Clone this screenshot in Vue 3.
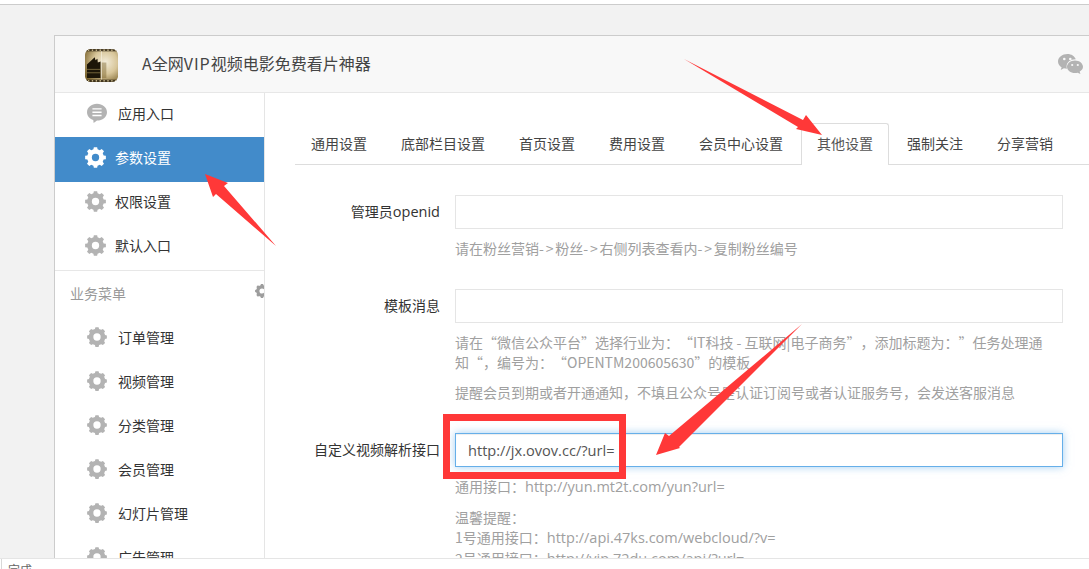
<script setup>
function gear(R, r, hole, n) {
  const pts = []
  const step = (Math.PI * 2) / n
  for (let i = 0; i < n; i++) {
    const a = i * step - Math.PI / 2
    const w = step * 0.2
    const w2 = step * 0.32
    pts.push([a - w2, r], [a - w, R], [a + w, R], [a + w2, r])
  }
  const ring = pts
    .map(([a, d], i) => `${i ? 'L' : 'M'}${(12 + d * Math.cos(a)).toFixed(2)} ${(12 + d * Math.sin(a)).toFixed(2)}`)
    .join('')
  return `${ring}ZM${12 - hole} 12a${hole} ${hole} 0 1 0 ${hole * 2} 0a${hole} ${hole} 0 1 0 ${-hole * 2} 0Z`
}
const sharpGear = gear(12, 9.6, 4.2, 8)
const softGear = gear(12, 10, 4.4, 8)

const topItems = [
  { label: '参数设置', active: true },
  { label: '权限设置' },
  { label: '默认入口' },
]
const subItems = ['订单管理', '视频管理', '分类管理', '会员管理', '幻灯片管理', '广告管理']
const tabs = ['通用设置', '底部栏目设置', '首页设置', '费用设置', '会员中心设置', '其他设置', '强制关注', '分享营销']
const ticks = [3, 7, 11, 15, 19, 23, 27, 31]
</script>

<template>
  <div class="page">
    <div class="topstrip"></div>
    <section class="panel">
      <header class="head">
        <svg class="logo" viewBox="0 0 34 34">
          <defs>
            <radialGradient id="lg" cx="0.62" cy="0.4" r="0.72">
              <stop offset="0" stop-color="#f3ecd9" />
              <stop offset="0.5" stop-color="#d8c69a" />
              <stop offset="1" stop-color="#7d6630" />
            </radialGradient>
            <clipPath id="lc"><rect width="34" height="34" rx="6" /></clipPath>
          </defs>
          <g clip-path="url(#lc)">
            <rect width="34" height="34" fill="url(#lg)" />
            <rect width="34" height="2.400" fill="#2a2110" opacity="0.8" />
            <rect y="31.600" width="34" height="2.400" fill="#2a2110" opacity="0.8" />
            <rect v-for="t in ticks" :key="t" :x="t" y="0.500" width="1.400" height="1.400" fill="#d8c89a" />
            <rect v-for="t in ticks" :key="'b' + t" :x="t" y="32.100" width="1.400" height="1.400" fill="#d8c89a" />
            <path d="M2 16l8-7.500.8 3 2-1.500.4 4 2.800-1V30H2z" fill="#1d1608" />
            <path d="M2 21h14M2 24.500h14" stroke="#9a8550" stroke-width="0.7" />
            <path d="M16 14h6v16h-6z" fill="#7d6630" opacity="0.45" />
            <rect x="16.500" y="2.400" width="0.700" height="29" fill="#f6f0e0" />
          </g>
        </svg>
        <h1 class="title">A全网<span class="vip">VIP</span>视频电影免费看片神器</h1>
        <svg class="wechat" viewBox="0 0 25 20">
          <path d="M9.500 0C4.300 0 0 3.300 0 7.400c0 2.400 1.400 4.400 3.600 5.800L2.700 16l3.200-1.700c1 .3 2 .5 3.100.5-.3-.8-.4-1.500-.4-2.300C8.600 8.400 12.300 5.200 17.800 5.300 16.700 2.200 13.400 0 9.500 0z" fill="#b3b3b3" />
          <circle cx="6.300" cy="5" r="1.300" fill="#f8f8f8" />
          <circle cx="12.300" cy="5" r="1.300" fill="#f8f8f8" />
          <path d="M17 6.500c-4.400 0-8 2.900-8 6.300s3.600 6.300 8 6.300c1 0 1.800-.1 2.600-.4L22.400 20l-.7-2.400c2-1.200 3.300-2.900 3.300-4.800 0-3.400-3.600-6.300-8-6.300z" fill="#b3b3b3" />
          <circle cx="14.200" cy="11" r="1.100" fill="#f8f8f8" />
          <circle cx="19.800" cy="11" r="1.100" fill="#f8f8f8" />
        </svg>
      </header>
      <div class="body">
        <aside class="side">
          <div class="group">
            <a class="row sub">
              <svg class="ico" viewBox="0 0 24 24">
                <path d="M12 1C5.400 1 0 5.500 0 11c0 4.300 3.100 7.800 7.500 9.300L8 24l4-3c6.600 0 12-4.500 12-10S18.600 1 12 1z" fill="#b3b3b3" />
                <path d="M6.500 7h11M6.500 11h11M6.500 15h11" stroke="#fff" stroke-width="1.700" />
              </svg>
              <span>应用入口</span>
            </a>
            <a v-for="it in topItems" :key="it.label" class="row" :class="{ active: it.active }">
              <svg class="ico big" viewBox="0 0 24 24"><path :d="sharpGear" fill-rule="evenodd" /></svg>
              <span>{{ it.label }}</span>
            </a>
          </div>
          <div class="section">
            <span>业务菜单</span>
            <svg class="mini" viewBox="0 0 24 24"><path :d="softGear" fill-rule="evenodd" /></svg>
          </div>
          <div class="list">
            <a v-for="s in subItems" :key="s" class="row sub">
              <svg class="ico" viewBox="0 0 24 24"><path :d="softGear" fill-rule="evenodd" /></svg>
              <span>{{ s }}</span>
            </a>
          </div>
        </aside>
        <main class="main">
          <nav class="tabs">
            <a v-for="t in tabs" :key="t" class="tab" :class="{ on: t === '其他设置' }">{{ t }}</a>
          </nav>
          <div class="field first">
            <label>管理员<span class="url">openid</span></label>
            <div class="ctrl">
              <input class="inp" type="text" />
              <p class="help">请在粉丝营销<span class="dash">-&gt;</span>粉丝<span class="dash">-&gt;</span>右侧列表查看内<span class="dash">-&gt;</span>复制粉丝编号</p>
            </div>
          </div>
          <div class="field">
            <label>模板消息</label>
            <div class="ctrl">
              <input class="inp" type="text" />
              <p class="help">请在“微信公众平台”选择行业为：“IT科技 - 互联网|电子商务”，添加标题为：”任务处理通知“，编号为：“OPENTM200605630”的模板</p>
              <p class="help gap">提醒会员到期或者开通通知，不填且公众号是认证订阅号或者认证服务号，会发送客服消息</p>
            </div>
          </div>
          <div class="field">
            <label>自定义视频解析接口</label>
            <div class="ctrl">
              <input class="inp focus" type="text" value="http://jx.ovov.cc/?url=" />
              <p class="help">通用接口：<span class="url">http://yun.mt2t.com/yun?url=</span></p>
              <p class="help gap">温馨提醒：<br />1号通用接口：<span class="url">http://api.47ks.com/webcloud/?v=</span><br />2号通用接口：<span class="url">http://vip.72du.com/api/?url=</span></p>
            </div>
          </div>
        </main>
      </div>
    </section>

    <svg class="marks" viewBox="0 0 1089 569">
      <rect x="446.500" y="417.500" width="176" height="58" fill="none" stroke="#ff3838" stroke-width="7" />
      <polygon points="684,59 803,120 806,115 822,135 796,129 798,127" fill="#ff3838" />
      <polygon points="205,174 228,183 224,186 276,246 216,194 213,197" fill="#ff3838" />
      <polygon points="802,324 669,436 665,433 656,455 680,448 679,447" fill="#ff3838" />
    </svg>

    <footer class="status"><span>完成</span></footer>
  </div>
</template>

<style>
html, body { margin: 0; overflow: hidden; background: #f2f2f2; }
</style>

<style scoped>
.page {
  position: relative;
  width: 1089px;
  height: 569px;
  overflow: hidden;
  background: #f2f2f2;
  font-family: "Noto Sans CJK SC", "Open Sans", sans-serif;
  font-size: 14px;
  color: #333;
  text-spacing-trim: space-all;
}
.topstrip { height: 4px; background: #fff; border-bottom: 1px solid #ccc; }
.panel {
  margin: 30px 0 0 54px;
  border-top: 1px solid #ccc;
  border-left: 1px solid #ccc;
  background: #fff;
  height: 600px;
}
.head {
  height: 56px;
  background: #f8f8f8;
  border-bottom: 1px solid #e7e7e7;
  display: flex;
  align-items: center;
  padding: 0 6px 0 30px;
}
.logo { width: 33px; height: 33px; flex: none; margin-top: 3px; }
.title { margin: 0 0 2px 24px; font-size: 16px; font-weight: 400; color: #444; flex: 1; }
.vip { letter-spacing: 1px; }
.wechat { width: 25px; height: 20px; flex: none; margin-top: -1px; }
.body { display: flex; }
.side {
  width: 209px;
  flex: none;
  border-right: 1px solid #e5e5e5;
  overflow: hidden;
  height: 520px;
}
.group { border-bottom: 1px solid #e7e7e7; padding-bottom: 1px; }
.row {
  display: flex;
  align-items: center;
  height: 44px;
  padding: 0 0 4px 30px;
  box-sizing: border-box;
  gap: 9px;
  color: #333;
}
.row.sub { padding-left: 32px; gap: 11px; }
.row.active { background: #428bca; color: #fff; height: 45px; margin-bottom: -1px; padding-bottom: 5px; }
.list .row { padding-bottom: 2px; }
.ico { width: 20px; height: 20px; fill: #b3b3b3; flex: none; }
.ico.big { width: 21px; height: 21px; }
.active .ico { fill: #fff; }
.section {
  height: 45px;
  box-sizing: border-box;
  padding-bottom: 2px;
  display: flex;
  align-items: center;
  justify-content: space-between;
  padding-left: 15px;
  color: #999;
}
.mini { width: 14px; height: 14px; fill: #9d9d9d; flex: none; margin-right: -5px; margin-top: -4px; }
.main { flex: 1; padding: 30px 0 0 30px; min-width: 0; }
.tabs { display: flex; border-bottom: 1px solid #ddd; height: 41px; }
.tab {
  padding: 0 15px;
  margin-right: 2px;
  border: 1px solid transparent;
  border-bottom: 0;
  line-height: 38px;
  color: #444;
  white-space: nowrap;
  height: 42px;
  box-sizing: border-box;
}
.tab.on {
  background: #fff;
  border-color: #ddd;
  border-radius: 3px 3px 0 0;
  color: #555;
}
.field { display: flex; gap: 15px; margin-top: 31px; }
.field.first { margin-top: 30px; }
.field label { width: 145px; flex: none; text-align: right; line-height: 32px; color: #333; white-space: nowrap; }
.ctrl { width: 608px; flex: none; }
.inp {
  display: block;
  width: 100%;
  height: 34px;
  box-sizing: border-box;
  border: 1px solid #e5e5e5;
  padding: 0 12px;
  font: 14.6px "Open Sans", sans-serif;
  color: #555;
  outline: 0;
  background: #fff;
}
.inp.focus {
  border-color: #66afe9;
  box-shadow: inset 0 1px 1px rgba(0, 0, 0, 0.075), 0 0 8px rgba(102, 175, 233, 0.6);
}
.help { margin: 9px 0 0; line-height: 20px; color: #a0a0a0; }
.help.gap { margin-top: 10px; }
.url { font-family: "Open Sans", sans-serif; font-size: 14.5px; }
.dash { letter-spacing: 1.8px; }
.marks { position: absolute; left: 0; top: 0; width: 1089px; height: 569px; pointer-events: none; }
.status {
  position: absolute;
  left: 0;
  right: 0;
  bottom: 0;
  height: 10px;
  background: #fff;
  border-top: 1px solid #e5e5e5;
  overflow: hidden;
}
.status span {
  display: block;
  margin-left: 1px;
  padding-left: 6px;
  border-left: 1px solid #d8d8d8;
  line-height: 14px;
  height: 14px;
  padding-top: 4px;
  font-size: 12px;
  color: #666;
}
</style>
